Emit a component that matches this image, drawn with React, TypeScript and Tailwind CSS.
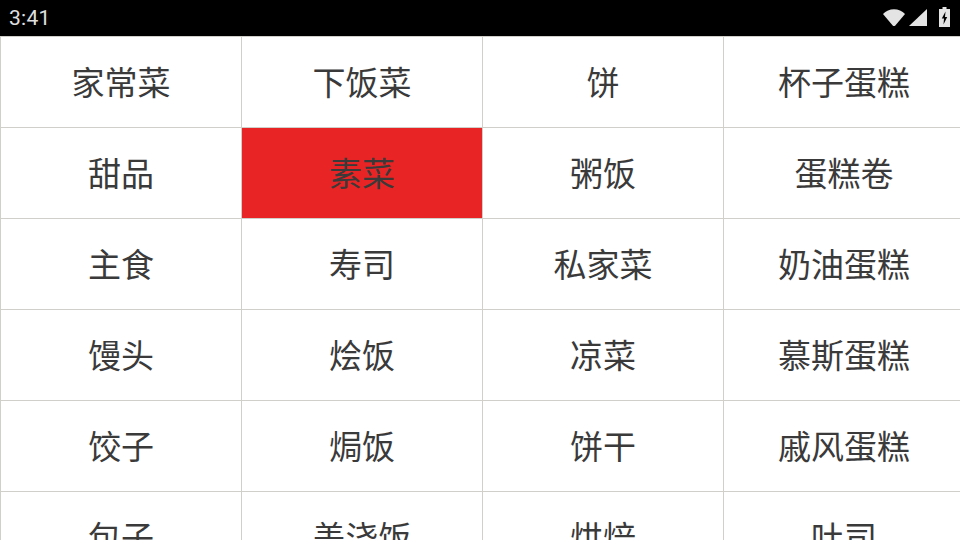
const rows = [
  ["家常菜", "下饭菜", "饼", "杯子蛋糕"],
  ["甜品", "素菜", "粥饭", "蛋糕卷"],
  ["主食", "寿司", "私家菜", "奶油蛋糕"],
  ["馒头", "烩饭", "凉菜", "慕斯蛋糕"],
  ["饺子", "焗饭", "饼干", "戚风蛋糕"],
  ["包子", "盖浇饭", "烘焙", "吐司"],
];

export default function App() {
  return (
    <div className="flex h-[540px] w-[960px] flex-col overflow-hidden bg-white font-['Roboto','Noto_Sans_CJK_SC',sans-serif]">
      <div className="flex h-9 shrink-0 items-center justify-between bg-black pl-[9px] pr-[10px]">
        <span className="text-[21px] leading-none tracking-[0.3px] text-[#e0e0e0]">3:41</span>
        <div className="flex items-center">
          <svg width="22" height="22" viewBox="0 0 22 22" className="mr-[4px]">
            <path d="M0 7 C5.5 0.5 16.5 0.5 22 7 L12.3 18.4 Q11 19.6 9.7 18.4 Z" fill="#e4e4e4" />
          </svg>
          <svg width="18" height="22" viewBox="0 0 18 22" className="mr-[12px]">
            <path d="M0 19 L18 2 V19 Z" fill="#e4e4e4" />
          </svg>
          <svg width="11" height="22" viewBox="0 0 11 22">
            <path d="M3.5 0 H7.5 V2 H11 V20 H0 V2 H3.5 Z" fill="#e4e4e4" />
            <path d="M6.5 4.5 L2.8 11.5 H5 L4.5 17.5 L8.2 10 H6 Z" fill="#000" />
          </svg>
        </div>
      </div>
      <div className="grid w-[964px] grid-cols-4">
        {rows.flat().map((t) => (
          <div
            key={t}
            className={`flex h-[91px] items-center justify-center border-l border-t border-[#d0cfca] pt-[3px] text-[33px] leading-none text-[#3a3a3a] ${t === "素菜" ? "bg-[#e92424]" : ""}`}
          >
            {t}
          </div>
        ))}
      </div>
    </div>
  );
}
